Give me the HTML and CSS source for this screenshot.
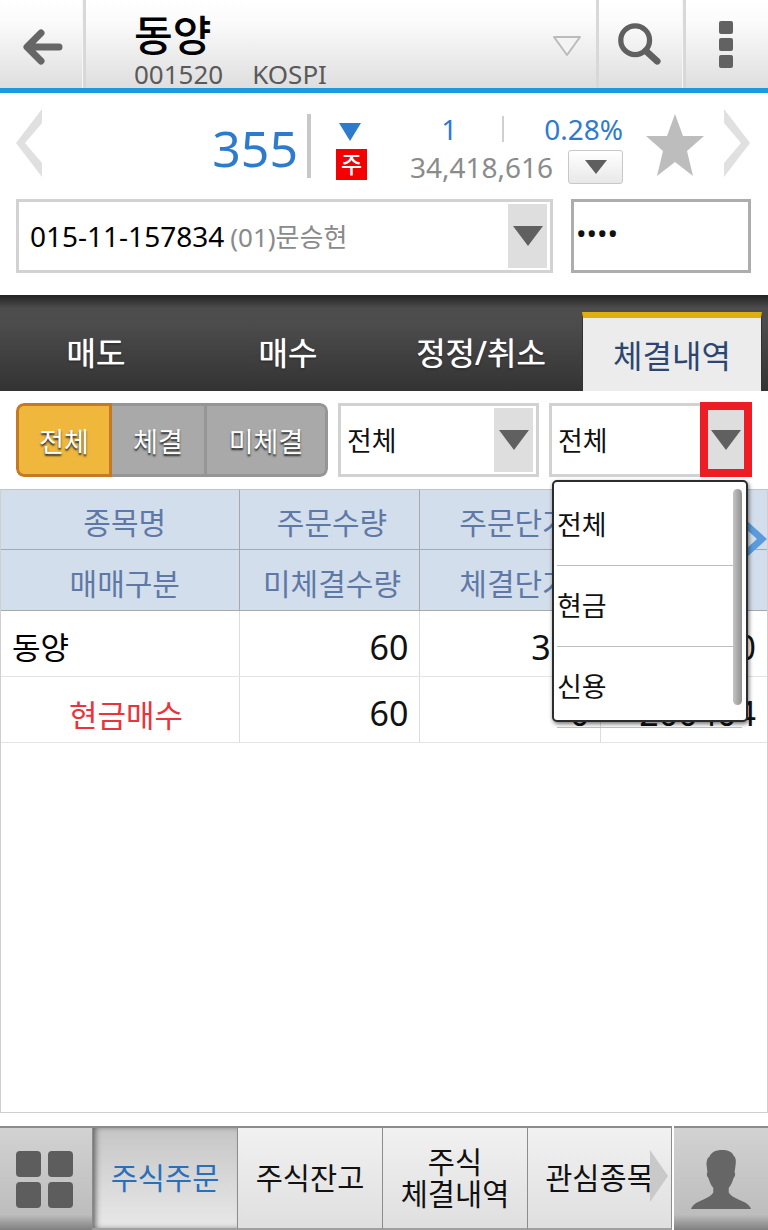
FILE: index.html
```html
<!DOCTYPE html>
<html lang="ko">
<head>
  <meta charset="UTF-8" />
  <meta name="viewport" content="width=device-width, initial-scale=1.0"/>
  <title>주식주문</title>
  <link rel="stylesheet" href="styles.css">
</head>
<body>
  <div class="topbar">
    <div class="top-btn back-btn">
      <svg width="48" height="48" viewBox="0 0 48 48"><path d="M40 24H10M22 10L8 24l14 14" fill="none" stroke="#666" stroke-width="7" stroke-linecap="round" stroke-linejoin="round"/></svg>
    </div>
    <div class="top-title">
      <div class="stock-name">동양</div>
      <div class="stock-code"><span>001520</span><span>KOSPI</span></div>
      <svg class="title-arrow" width="32" height="24" viewBox="0 0 32 24"><path d="M3 3h26L16 21z" fill="#f3f3f3" stroke="#bbb" stroke-width="2" stroke-linejoin="round"/></svg>
    </div>
    <div class="top-btn search-btn">
      <svg width="46" height="46" viewBox="0 0 48 48"><circle cx="20" cy="20" r="15" fill="none" stroke="#606060" stroke-width="5.5"/><path d="M31 31l12 11" stroke="#606060" stroke-width="7" stroke-linecap="round"/></svg>
    </div>
    <div class="top-btn more-btn">
      <span class="dot"></span><span class="dot"></span><span class="dot"></span>
    </div>
  </div>

  <div class="price-row">
    <svg class="chev" width="26" height="68" viewBox="0 0 26 68"><path d="M26 0v14L9 34l17 20v14L0 34z" fill="#e0e0e0"/></svg>
    <div class="price">355</div>
    <div class="price-sep"></div>
    <div class="price-flag">
      <svg class="flag-arrow" width="22" height="18" viewBox="0 0 22 18"><path d="M0 0h22L11 18z" fill="#2e7bcd"/></svg>
      <span class="ju">주</span>
    </div>
    <div class="price-info">
      <div class="info-top">
        <span class="change">1</span>
        <span class="info-sep"></span>
        <span class="rate">0.28%</span>
      </div>
      <div class="info-bottom">
        <span class="volume">34,418,616</span>
        <span class="mini-btn"><svg width="22" height="14" viewBox="0 0 22 14"><path d="M0 0h22L11 14z" fill="#5f5f5f"/></svg></span>
      </div>
    </div>
    <svg class="star" width="58" height="62" viewBox="0 0 58 62"><path d="M29 0l8 22h21L41 37l6 25-18-14-18 14 6-25L0 22h21z" fill="#bdbdbd"/></svg>
    <svg class="chev" width="26" height="68" viewBox="0 0 26 68"><path d="M0 0v14l17 20L0 54v14l26-34z" fill="#e0e0e0"/></svg>
  </div>

  <div class="account-row">
    <div class="select account-select">
      <span class="account-no">015-11-157834</span>
      <span class="account-name">(01)문승현</span>
      <span class="select-arrow"><svg width="30" height="20" viewBox="0 0 30 20"><path d="M0 0h30L15 20z" fill="#606060"/></svg></span>
    </div>
    <div class="password">••••</div>
  </div>

  <div class="tabs">
    <div class="tab">매도</div>
    <div class="tab">매수</div>
    <div class="tab">정정/취소</div>
    <div class="tab active">체결내역</div>
  </div>

  <div class="filter-row">
    <div class="segment">
      <div class="seg on">전체</div>
      <div class="seg seg-mid">체결</div>
      <div class="seg seg-last">미체결</div>
    </div>
    <div class="select filter-select">
      <span>전체</span>
      <span class="select-arrow"><svg width="30" height="20" viewBox="0 0 30 20"><path d="M0 0h30L15 20z" fill="#606060"/></svg></span>
    </div>
    <div class="select filter-select">
      <span>전체</span>
      <span class="select-arrow marked"><svg width="30" height="20" viewBox="0 0 30 20"><path d="M0 0h30L15 20z" fill="#606060"/></svg></span>
    </div>

    <div class="popup">
      <div class="popup-item">전체</div>
      <div class="popup-item">현금</div>
      <div class="popup-item">신용</div>
      <div class="popup-scroll"></div>
    </div>
  </div>

  <div class="table-wrap">
    <table class="orders">
      <colgroup><col class="c1"><col class="c2"><col class="c3"><col></colgroup>
      <tr class="head">
        <th>종목명</th><th>주문수량</th><th>주문단가</th><th></th>
      </tr>
      <tr class="head head2">
        <th>매매구분</th><th>미체결수량</th><th>체결단가</th><th></th>
      </tr>
      <tr class="data">
        <td class="name">동양</td><td>60</td><td>355</td><td>0</td>
      </tr>
      <tr class="data">
        <td class="buy">현금매수</td><td>60</td><td>0</td><td>200404</td>
      </tr>
    </table>
    <svg class="table-next" width="21" height="38" viewBox="0 0 21 38"><path d="M0 0l21 19L0 38v-9l11-10L0 9z" fill="#5b9bdc"/></svg>
  </div>

  <div class="bottom-nav">
    <div class="side-btn grid-btn">
      <div class="grid-icon"><span></span><span></span><span></span><span></span></div>
    </div>
    <div class="nav-item current">주식주문</div>
    <div class="nav-item">주식잔고</div>
    <div class="nav-item two-line">주식<br>체결내역</div>
    <div class="nav-item more">관심종목
      <svg class="nav-more" width="18" height="52" viewBox="0 0 18 52"><path d="M0 0l18 26L0 52z" fill="#c9c9c9"/></svg>
    </div>
    <div class="side-btn user-btn">
      <svg width="62" height="60" viewBox="0 0 62 62"><path d="M19 8c2-5 7-7 13-7s11 2 12 6c2 1 3 5 2 10l-1 7c1 1 1 4-1 6-1 4-3 8-5 10v5c2 4 8 6 14 9 5 2 8 5 9 8H0c1-3 4-6 9-8 6-3 12-5 14-9v-5c-2-2-4-6-5-10-2-2-2-5-1-6l-1-8c0-4 1-7 3-8z" fill="#666"/></svg>
    </div>
  </div>
</body>
</html>
```
FILE: styles.css
```css
* {
  box-sizing: border-box;
}

html, body {
  margin: 0;
  padding: 0;
}

body {
  width: 768px;
  height: 1230px;
  overflow: hidden;
  background: white;
  font-family: 'Noto Sans', 'Noto Sans CJK KR', sans-serif;
  color: #111;
}

/* topo */
.topbar {
  display: flex;
  height: 93px;
  border-bottom: 5px solid #1b9ade;
  background: linear-gradient(#ffffff 0%, #fbfbfb 25%, #dedede 100%);
}

.top-btn {
  display: flex;
  align-items: center;
  justify-content: center;
  border-right: 3px solid #d8d8d8;
  box-shadow: inset -1px 0 0 #f7f7f7;
}

.back-btn {
  width: 86px;
  padding: 6px 0 0 3px;
}

.top-title {
  position: relative;
  width: 513px;
  padding-left: 48px;
  border-right: 3px solid #d8d8d8;
}

.stock-name {
  font-size: 42px;
  font-weight: 500;
  line-height: 50px;
  margin-top: 10px;
  color: #000;
}

.stock-code {
  display: flex;
  gap: 29px;
  font-size: 26px;
  line-height: 28px;
  color: #5a5a5a;
}

.title-arrow {
  position: absolute;
  top: 34px;
  right: 13px;
}

.search-btn {
  width: 87px;
  padding-right: 4px;
}

.more-btn {
  flex: 1;
  flex-direction: column;
  gap: 4px;
  border-right: none;
  box-shadow: none;
  padding-right: 3px;
}

.dot {
  width: 14px;
  height: 13px;
  border-radius: 2px;
  background: #626262;
}

/* preco */
.price-row {
  display: flex;
  align-items: center;
  height: 106px;
  padding: 0 18px 6px 16px;
}

.price-row > * {
  flex-shrink: 0;
}

.price {
  width: 256px;
  margin-top: 10px;
  text-align: right;
  font-size: 50px;
  line-height: 64px;
  color: #2e7bcd;
}

.price-sep {
  width: 4px;
  height: 64px;
  margin: 6px 0 0 9px;
  background: #c8c8c8;
}

.price-flag {
  display: flex;
  flex-direction: column;
  align-items: center;
  gap: 8px;
  width: 31px;
  margin-left: 25px;
  margin-top: 16px;
}

.flag-arrow {
  margin-right: 4px;
}

.ju {
  width: 31px;
  height: 31px;
  background: #f40000;
  color: white;
  font-size: 23px;
  font-weight: 500;
  line-height: 30px;
  text-align: center;
}

.price-info {
  width: 256px;
  margin-top: 11px;
  font-size: 28px;
}

.info-top {
  display: flex;
  align-items: center;
  height: 34px;
  color: #2e7bcd;
}

.change {
  width: 95px;
  text-align: right;
}

.info-sep {
  width: 2px;
  height: 26px;
  margin-left: 45px;
  background: #d0d0d0;
}

.rate {
  margin-left: 40px;
}

.info-bottom {
  display: flex;
  align-items: center;
  height: 37px;
  margin-top: 3px;
  padding-left: 43px;
  color: #8b8b8b;
}

.mini-btn {
  display: flex;
  align-items: center;
  justify-content: center;
  width: 55px;
  height: 34px;
  margin-left: 15px;
  border: 1px solid #c8c8c8;
  border-radius: 3px;
  background: linear-gradient(#ffffff, #e8e8e8);
}

.star {
  margin: 4px 20px 0 23px;
}

/* conta */
.account-row {
  display: flex;
  gap: 18px;
  height: 74px;
  padding-left: 16px;
}

.select {
  position: relative;
  display: flex;
  align-items: center;
  border: 3px solid #d2d2d2;
  background: white;
  font-size: 27px;
  color: #111;
}

.account-select {
  width: 537px;
  padding-left: 11px;
}

.account-no {
  font-size: 28px;
  color: #000;
}

.account-name {
  margin-left: 6px;
  font-size: 26px;
  color: #8a8a8a;
}

.select-arrow {
  position: absolute;
  top: 2px;
  right: 3px;
  bottom: 2px;
  width: 39px;
  display: flex;
  align-items: center;
  justify-content: center;
  background: #dedede;
}

.password {
  width: 180px;
  padding-left: 2px;
  padding-bottom: 6px;
  border: 3px solid #adadad;
  font-size: 28px;
  line-height: 62px;
  color: #111;
}

/* abas */
.tabs {
  display: flex;
  height: 96px;
  margin-top: 22px;
  background: linear-gradient(#222 0%, #4d4d4d 14%, #4c4c4c 30%, #333 100%);
}

.tab {
  width: 192px;
  padding-top: 33px;
  text-align: center;
  font-size: 32px;
  line-height: 50px;
  color: white;
  text-shadow: 0 0 1px #fff, 0 1px 2px #111;
}

.tab:nth-child(3) {
  width: 194px;
}

.tab.active {
  width: 180px;
  margin: 17px 0 0 4px;
  padding-top: 12px;
  border: 1px solid #333;
  border-bottom: none;
  border-top: 6px solid #deaf0f;
  background: #ececec;
  color: #2c4672;
  text-shadow: none;
  line-height: 52px;
}

/* filtros */
.filter-row {
  position: relative;
  display: flex;
  height: 74px;
  margin-top: 12px;
  padding-left: 16px;
}

.segment {
  display: flex;
  width: 312px;
  height: 74px;
  border-radius: 8px;
  overflow: hidden;
  font-size: 27px;
  color: white;
  text-shadow: 0 2px 2px #222;
}

.seg {
  display: flex;
  align-items: center;
  justify-content: center;
  border: 3px solid #969696;
  border-width: 3px 3px 3px 0;
  background: #a9a9a9;
}

.seg.on {
  width: 96px;
  border: 3px solid #c47a25;
  border-radius: 8px 0 0 8px;
  background: #efb83d;
}

.seg-mid {
  width: 95px;
}

.seg-last {
  width: 121px;
  border-radius: 0 8px 8px 0;
}

.filter-select {
  width: 201px;
  height: 74px;
  padding: 0 0 2px 6px;
  margin-left: 10px;
}

.select-arrow.marked {
  top: -4px;
  right: -5px;
  bottom: -3px;
  width: 52px;
  border: 8px solid #ee1c25;
}

.popup {
  position: absolute;
  z-index: 5;
  top: 77px;
  left: 552px;
  width: 196px;
  height: 242px;
  padding: 3px 4px 0 3px;
  border: 2px solid #2c2c2c;
  border-radius: 5px;
  background: white;
  box-shadow: 1px 2px 4px rgba(0,0,0,0.55);
  font-size: 27px;
  color: #111;
}

.popup-item {
  height: 81px;
  padding-top: 21px;
  line-height: 38px;
  border-bottom: 1px solid #bdbdbd;
}

.popup-item:last-of-type {
  border-bottom: none;
}

.popup-scroll {
  position: absolute;
  top: 7px;
  right: 4px;
  width: 9px;
  height: 216px;
  border-radius: 5px;
  background: linear-gradient(90deg, #c4c4c4, #8f8f8f);
}

/* tabela */
.table-wrap {
  position: relative;
  height: 624px;
  margin-top: 12px;
  border: 1px solid #cfcfcf;
  border-top-color: #c4c4c4;
}

.orders {
  width: 100%;
  table-layout: fixed;
  border-collapse: collapse;
}

.c1 {
  width: 238px;
}

.c2 {
  width: 180px;
}

.c3 {
  width: 181px;
}

.head th {
  height: 59px;
  padding: 4px 0 0;
  background: #d3deec;
  border-right: 1px solid #a8a8a8;
  border-bottom: 1px solid #a8a8a8;
  font-size: 30px;
  font-weight: 400;
  color: #5f79a6;
}

.head th:first-child {
  padding-left: 10px;
}

.head th:nth-child(2) {
  padding-left: 6px;
}

.head th:nth-child(3) {
  padding-left: 10px;
}

.head th:last-child {
  border-right: none;
}

.head2 th {
  height: 61px;
}

.data td {
  height: 66px;
  padding: 7px 10px 0 0;
  text-align: right;
  border-right: 1px solid #dcdcdc;
  border-bottom: 1px solid #e4e4e4;
  font-size: 34px;
  color: #111;
}

.data td:last-child {
  border-right: none;
  padding-right: 11px;
}

.data td.name {
  padding: 4px 0 0 11px;
  text-align: left;
  font-size: 31px;
  color: #000;
}

.data td.buy {
  padding: 8px 0 0 68px;
  text-align: left;
  font-size: 31px;
  color: #e8343a;
}

.table-next {
  position: absolute;
  top: 30px;
  right: 0;
}

/* rodape */
.bottom-nav {
  display: flex;
  height: 104px;
  margin-top: 13px;
}

.side-btn {
  display: flex;
  align-items: center;
  justify-content: center;
  width: 92px;
  border-top: 2px solid #8c8c8c;
  background: linear-gradient(#d2d2d2 0%, #bdbdbd 85%, #7f7f7f 100%);
}

.grid-btn {
  padding-right: 3px;
}

.grid-icon {
  display: grid;
  grid-template-columns: 25px 25px;
  gap: 5px 7px;
}

.grid-icon span {
  height: 26px;
  border-radius: 4px;
  background: #5d5d5d;
}

.nav-item {
  position: relative;
  display: flex;
  align-items: center;
  justify-content: center;
  width: 145px;
  border-top: 2px solid #8c8c8c;
  border-bottom: 2px solid #a0a0a0;
  border-left: 1px solid #8c8c8c;
  background: linear-gradient(#f1f1f1, #dfdfdf);
  font-size: 29.5px;
  line-height: 32px;
  color: #111;
  text-align: center;
}

.nav-item.current {
  background: linear-gradient(#c6c6c6, #e8e8e8);
  color: #2a6fb8;
  box-shadow: inset 4px 0 6px -2px #555;
}

.nav-more {
  position: absolute;
  top: 22px;
  right: 3px;
}

.more {
  border-right: 1px solid #8c8c8c;
}

.user-btn {
  flex: 1;
  margin-left: 2px;
}
```
